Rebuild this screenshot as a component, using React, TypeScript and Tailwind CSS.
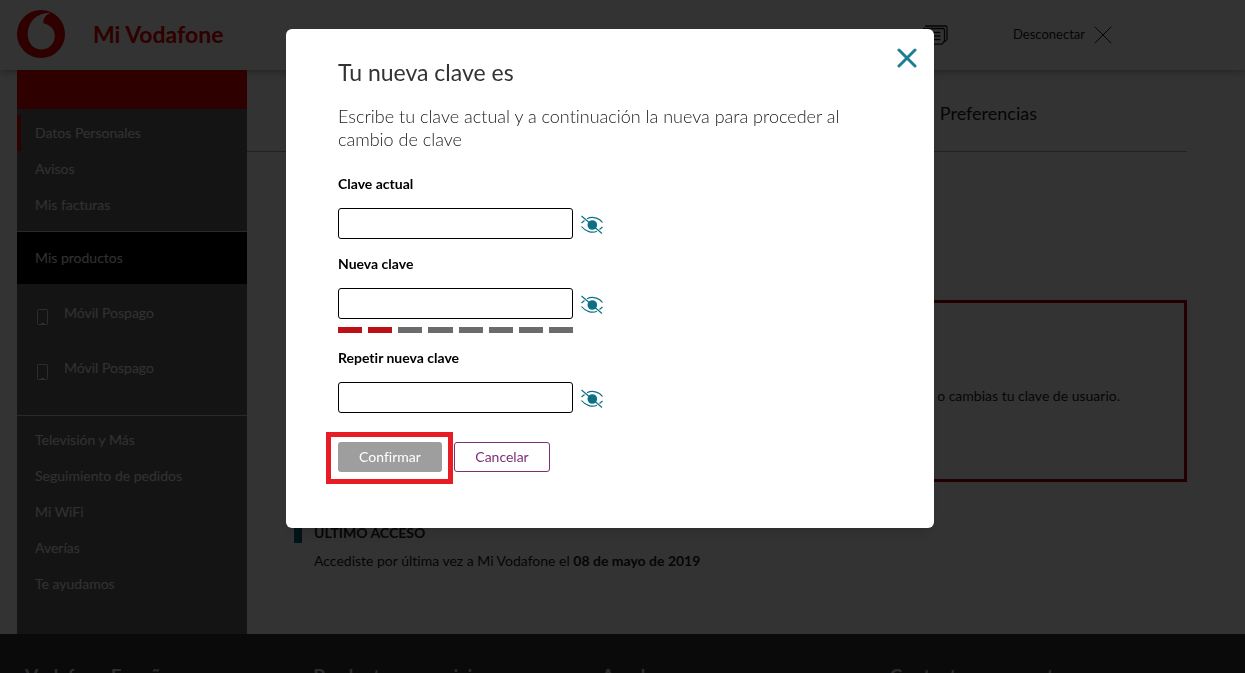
import { useState } from "react";

type NavItem = {
  label: string;
  active?: boolean;
};

const ACCOUNT_ITEMS: NavItem[] = [
  { label: "Datos Personales", active: true },
  { label: "Avisos" },
  { label: "Mis facturas" },
];

const PRODUCTS = ["Móvil Pospago", "Móvil Pospago"];

const HELP_ITEMS: NavItem[] = [
  { label: "Televisión y Más" },
  { label: "Seguimiento de pedidos" },
  { label: "Mi WiFi" },
  { label: "Averías" },
  { label: "Te ayudamos" },
];

const FOOTER_TITLES = [
  "Vodafone España",
  "Productos y servicios",
  "Ayuda",
  "Contacta con nosotros",
];

const STRENGTH_STEPS = [1, 2, 3, 4, 5, 6, 7, 8];

function Logo() {
  return (
    <svg viewBox="0 0 48 48" className="size-12" aria-hidden="true">
      <circle cx="24" cy="24" r="24" fill="#e60000" />
      <path
        d="M24.200 39.500C16.500 39.500 10.700 33 10.700 24C10.700 17.800 13.500 11.800 17.500 8.200C21.400 4.800 27 2.700 32 2.700C32.700 2.700 33.300 2.700 33.600 2.900C29.400 3.800 26.400 8 26.400 12.300L26.400 13.300C33.400 15 37.800 19.600 37.800 26C37.800 33.500 32 39.500 24.200 39.500Z"
        fill="#fff"
      />
    </svg>
  );
}

function CloseIcon({ className }: { className: string }) {
  return (
    <svg viewBox="0 0 20 20" fill="none" stroke="currentColor" strokeLinecap="round" className={className} aria-hidden="true">
      <path d="M2 2L18 18M18 2L2 18" />
    </svg>
  );
}

function BillsIcon() {
  return (
    <svg viewBox="0 0 28 20" fill="none" stroke="#222" strokeWidth="1.300" className="h-5 w-7" aria-hidden="true">
      <path d="M5 1H25.500Q27 1 27 2.500V14L25 17" />
      <path d="M3 3.500H23Q24.500 3.500 24.500 5V16L22 19.200H2" />
      <path d="M5 7.500H20.500M5 11H20.500M5 14.500H20.500" />
    </svg>
  );
}

function EyeOffIcon() {
  return (
    <svg viewBox="0 0 24 20" fill="none" stroke="#0b7285" strokeWidth="1.200" className="h-5 w-6" aria-hidden="true">
      <path d="M7 3.800C12 1.200 19 2.500 22.500 7.500" />
      <path d="M1.500 8L4.500 5.500" />
      <path d="M1.500 11.500C5.500 16.500 12 18.500 17 16.200" />
      <path d="M19.500 14.500L22.500 12" />
      <circle cx="12.300" cy="10" r="4.800" fill="#0b7285" stroke="none" />
      <path d="M1.500 1L22 18.500" />
    </svg>
  );
}

function PhoneIcon() {
  return (
    <svg viewBox="0 0 12 17" fill="none" stroke="#e0e0e0" className="h-[17px] w-3" aria-hidden="true">
      <rect x="0.500" y="0.500" width="10" height="15" rx="1" />
      <path d="M4 14.500H7" />
    </svg>
  );
}

function NavLinks({ items }: { items: NavItem[] }) {
  return (
    <ul>
      {items.map((item) => (
        <li
          key={item.label}
          className={
            item.active
              ? "border-l-4 border-[#e60000] pl-[14px] leading-9"
              : "pl-[18px] leading-9"
          }
        >
          <a href="#">{item.label}</a>
        </li>
      ))}
    </ul>
  );
}

function PasswordField({ id, label }: { id: string; label: string }) {
  const [visible, setVisible] = useState(false);

  return (
    <div>
      <label htmlFor={id} className="block text-sm leading-5 font-bold">
        {label}
      </label>
      <div className="mt-[14px] flex items-center gap-[7px]">
        <input
          id={id}
          type={visible ? "text" : "password"}
          className="h-[31px] w-[235px] rounded-[3px] border border-black px-2"
        />
        <button
          type="button"
          aria-label="Mostrar clave"
          className="pt-[2px]"
          onClick={() => setVisible(!visible)}
        >
          <EyeOffIcon />
        </button>
      </div>
    </div>
  );
}

function Header() {
  return (
    <header className="flex h-[70px] items-center bg-white pb-[2px] pl-[17px] shadow-[0_2px_8px_rgba(0,0,0,0.3)]">
      <Logo />
      <span className="ml-7 text-[23px] font-bold text-[#e60000]">
        Mi Vodafone
      </span>
      <div className="ml-auto flex items-center pt-[2px] pr-[132px] text-[13px] text-[#222]">
        <a href="#" aria-label="Facturas" className="mr-[65px]">
          <BillsIcon />
        </a>
        <a href="#" className="flex items-center gap-2">
          Desconectar
          <CloseIcon className="size-5" />
        </a>
      </div>
    </header>
  );
}

function Sidebar() {
  return (
    <nav className="w-[230px] shrink-0 bg-[#666] text-sm text-[#f4f4f4]">
      <div className="h-[39px] bg-[#e60000]" />
      <div className="pt-1.5 pb-2">
        <NavLinks items={ACCOUNT_ITEMS} />
      </div>
      <a
        href="#"
        className="block h-[53px] border-t border-[#ccc] bg-black pl-[18px] leading-[52px]"
      >
        Mis productos
      </a>
      <ul className="h-[131px] pt-px">
        {PRODUCTS.map((product, i) => (
          <li key={i} className="h-[55px] pt-4 pl-5">
            <a href="#" className="flex items-start gap-[15px]">
              <span className="pt-2">
                <PhoneIcon />
              </span>
              <span className="leading-6">{product}</span>
            </a>
          </li>
        ))}
      </ul>
      <div className="border-t border-[#ccc] pt-1.5 pb-8">
        <NavLinks items={HELP_ITEMS} />
      </div>
    </nav>
  );
}

function Content() {
  return (
    <main className="mr-[58px] flex grow flex-col text-sm text-[#222]">
      <div className="flex h-[82px] items-center justify-end border-b border-[#aaa] pr-[150px] text-[18px]">
        <a href="#" className="pt-1.5">Preferencias</a>
      </div>
      <section className="mt-[148px] ml-12 flex h-[182px] items-center justify-end border-3 border-[#a8000c] pr-16">
        <p className="pt-2.5">o cambias tu clave de usuario.</p>
      </section>
      <section className="mt-10 ml-[47px]">
        <h2 className="border-l-8 border-[#00697c] pl-3 leading-[21px] font-bold">
          ÚLTIMO ACCESO
        </h2>
        <p className="mt-2 pl-5 leading-5">
          Accediste por última vez a Mi Vodafone el{" "}
          <strong className="font-bold">08 de mayo de 2019</strong>
        </p>
      </section>
    </main>
  );
}

function PasswordDialog() {
  return (
    <div
      role="dialog"
      aria-modal="true"
      aria-labelledby="dialog-title"
      className="relative mt-[29px] mr-[25px] w-[648px] rounded-md bg-white pt-[27px] pr-20 pb-11 pl-13 text-black shadow-lg"
    >
      <button
        type="button"
        aria-label="Cerrar"
        className="absolute top-[19px] right-[17px] text-[#1b7f93]"
      >
        <CloseIcon className="size-5 stroke-3" />
      </button>
      <h1 id="dialog-title" className="text-[23px] leading-8 text-[#333]">
        Tu nueva clave es
      </h1>
      <p className="mt-[17px] text-[18px] leading-[23px] font-light text-[#222]">
        Escribe tu clave actual y a continuación la nueva para proceder al
        cambio de clave
      </p>
      <form className="mt-[23px]" onSubmit={(e) => e.preventDefault()}>
        <PasswordField id="current" label="Clave actual" />
        <div className="mt-[15px]">
          <PasswordField id="next" label="Nueva clave" />
        </div>
        <div className="mt-2 flex w-[235px] gap-1.5">
          {STRENGTH_STEPS.map((step) => (
            <span
              key={step}
              className={
                step <= 2 ? "h-1.5 flex-1 bg-[#bd1118]" : "h-1.5 flex-1 bg-[#6b6b6b]"
              }
            />
          ))}
        </div>
        <div className="mt-[15px]">
          <PasswordField id="repeat" label="Repetir nueva clave" />
        </div>
        <div className="mt-[19px] -ml-3 flex items-start gap-px text-sm">
          <span className="border-5 border-[#e81c24] pt-[5px] pr-[6px] pb-[7px] pl-[7px]">
            <button
              type="submit"
              className="block h-[30px] w-[104px] rounded-[3px] bg-[#9e9e9e] text-white"
            >
              Confirmar
            </button>
          </span>
          <button
            type="button"
            className="mt-[10px] h-[30px] w-24 rounded-[3px] border border-[#7e2f75] text-[#7e2f75]"
          >
            Cancelar
          </button>
        </div>
      </form>
    </div>
  );
}

export default function App() {
  return (
    <div className="h-screen overflow-hidden bg-white font-[Lato,sans-serif] [font-variant-ligatures:none]">
      <Header />
      <div className="relative flex pl-[17px]">
        <Sidebar />
        <Content />
      </div>
      <footer className="grid grid-cols-4 bg-[#333] pt-7 pr-[67px] pb-10 pl-[25px] text-[19px] font-bold text-[#ddd]">
        {FOOTER_TITLES.map((title) => (
          <h2 key={title}>{title}</h2>
        ))}
      </footer>
      <div className="fixed inset-0 flex items-start justify-center bg-black/80">
        <PasswordDialog />
      </div>
    </div>
  );
}
